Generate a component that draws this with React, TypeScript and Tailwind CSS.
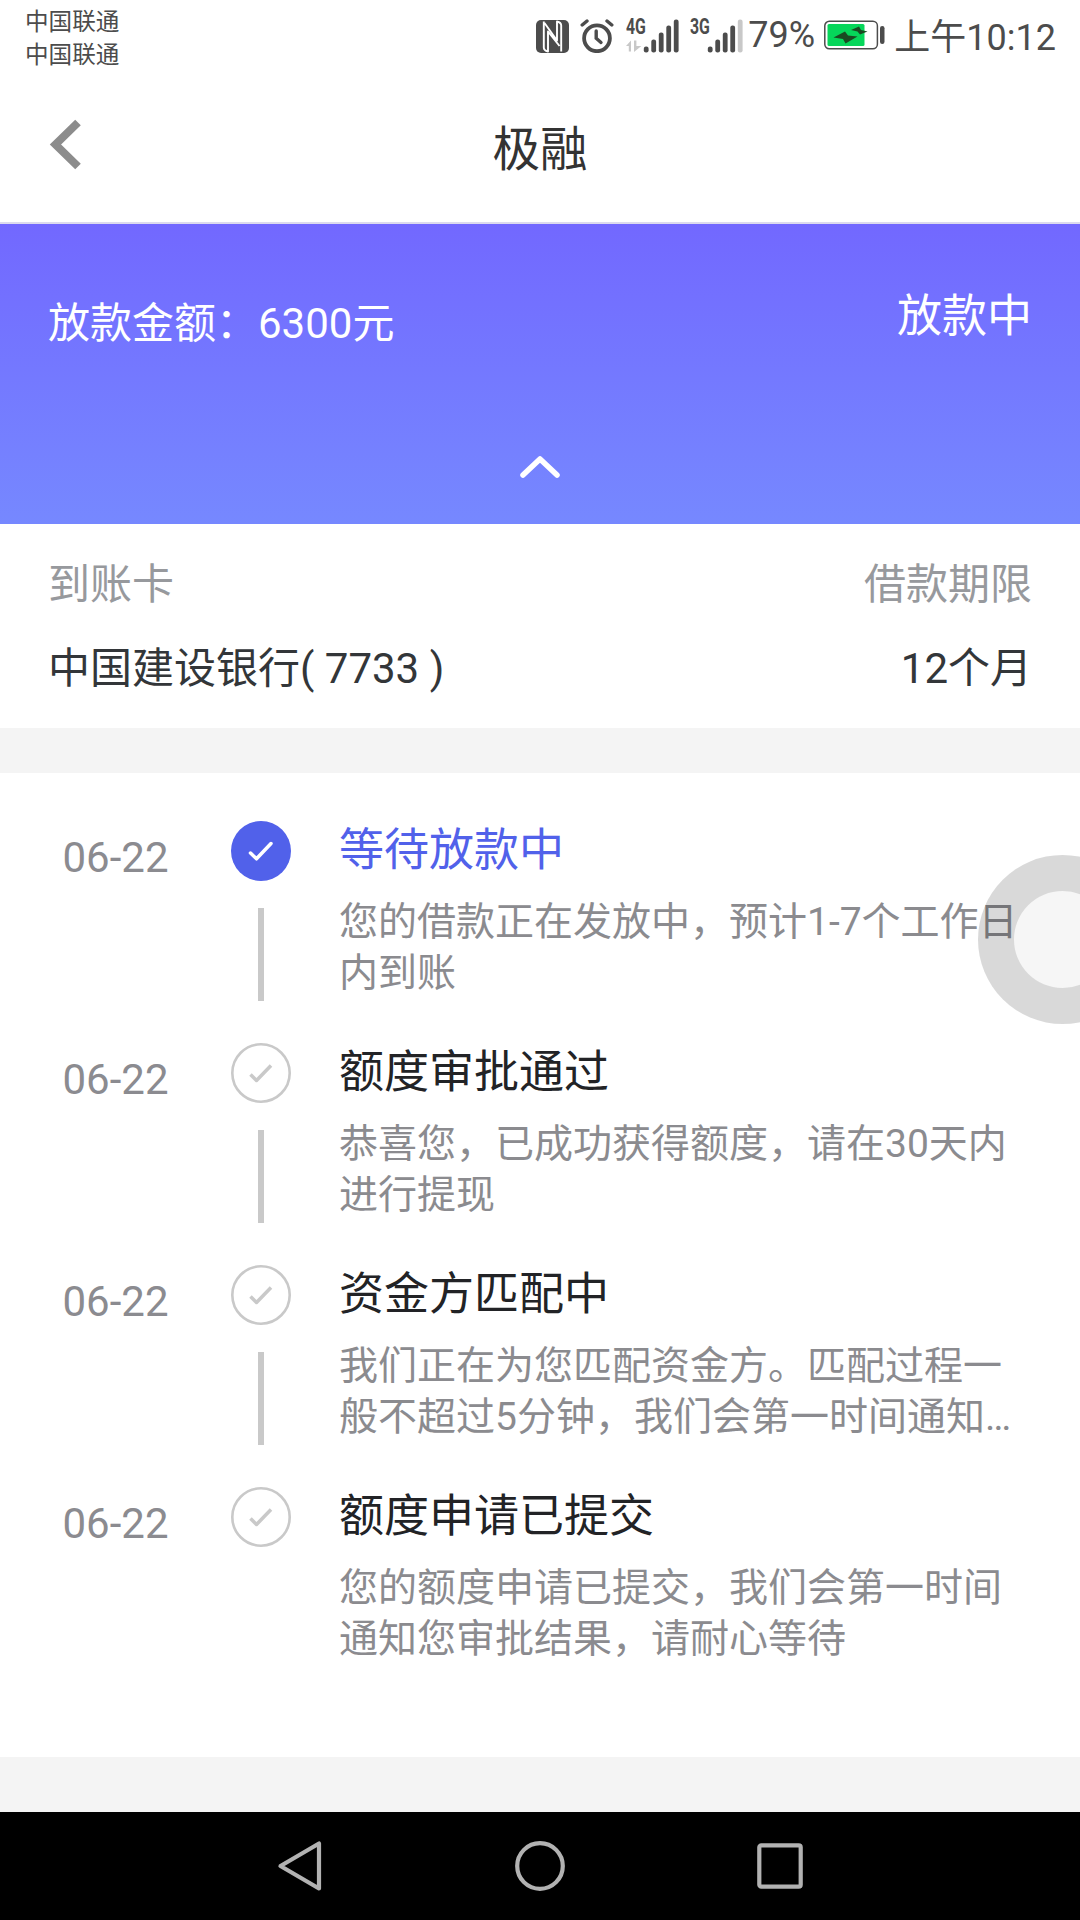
const NfcIcon = () => (
  <svg width="33" height="33" viewBox="0 0 33 33">
    <rect width="33" height="33" rx="5" fill="#4c4c4c" />
    <path
      d="M7.800 1.500V27.500Q7.800 30.500 12 31.500V11.500L23.500 26M25.200 31.500V5.500Q25.200 2.500 21 1.500V20.500L8.500 3"
      fill="none"
      stroke="#fff"
      strokeWidth="1.900"
      strokeLinejoin="round"
    />
  </svg>
);

const AlarmIcon = () => (
  <svg width="34" height="34" viewBox="0 0 34 34" fill="none" stroke="#4c4c4c" strokeWidth="3.800" strokeLinecap="round">
    <circle cx="17" cy="19.300" r="12.900" />
    <path d="M16.200 12v7.300l4.800 4.200" strokeWidth="3.400" />
    <path d="M2.200 6 7 2M31.800 6 27 2" strokeWidth="3.400" />
  </svg>
);

type SignalProps = {
  label: string;
  bars: number;
  data?: boolean;
};

const barHeights = [6, 13, 20, 27, 33];

const Signal = ({ label, bars, data }: SignalProps) => (
  <div className="relative h-[34px] w-[53px]">
    <span className="absolute left-0 top-0 origin-left scale-x-[0.72] text-[22px] font-bold leading-[16px]">{label}</span>
    <svg width="53" height="34" viewBox="0 0 53 34">
      {data && (
        <path d="M0 27 5 21.500V32.500H2.800V27zM8 21.500h2.400v5.500h5L8 33z" fill="#c8c8c8" />
      )}
      {barHeights.map((h, i) => (
        <rect key={h} x={17.8 + i * 7.5} y={33.5 - h} width="4.800" height={h} rx="2.200" fill={i < bars ? '#4c4c4c' : '#c8c8c8'} />
      ))}
    </svg>
  </div>
);

const BatteryIcon = () => (
  <svg width="61" height="30" viewBox="0 0 61 30">
    <rect x="0.800" y="1.300" width="52.600" height="27.500" rx="4.500" fill="#fff" stroke="#4c4c4c" strokeWidth="1.500" />
    <rect x="3.500" y="4" width="37" height="22" rx="1.500" fill="#06d65a" />
    <path d="M9.500 17.500 21 11.500 24 15.500 33.500 16.500 21.500 23.500 19 19z" fill="#1b4a22" />
    <path d="M27 10 35 6.500 37 10 43.500 11.500 36 14.500 33.500 11.500z" fill="#1b4a22" />
    <rect x="56" y="6" width="4.500" height="18" rx="2.200" fill="#4c4c4c" />
  </svg>
);

const StatusBar = () => (
  <div className="flex h-[72px] justify-between pl-[25px] pr-[24px] text-[#4c4c4c]">
    <div className="pt-[6px] text-[23.600px] leading-[33px]">
      <p>中国联通</p>
      <p>中国联通</p>
    </div>
    <div className="flex items-start text-[36px] leading-[40px]">
      <div className="mt-5 flex">
        <NfcIcon />
        <div className="ml-[11px] -mt-px">
          <AlarmIcon />
        </div>
      </div>
      <div className="ml-[12px] mt-[19px] flex gap-[11px]">
        <Signal label="4G" bars={5} data />
        <Signal label="3G" bars={4} />
      </div>
      <span className="ml-[5px] mt-[15px] w-[66px]">79%</span>
      <div className="ml-[10px] mt-5">
        <BatteryIcon />
      </div>
      <span className="ml-[9px] mt-[18px]">上午10:12</span>
    </div>
  </div>
);

const Header = () => (
  <header className="grid h-[152px] grid-cols-3 border-b-2 border-[#dcdaee]">
    <button className="ml-[49px] mt-[46px] h-[52px] w-[34px]">
      <svg width="34" height="52" viewBox="0 0 34 52">
        <path d="M29 4.500 6.500 26.500 29 48.500" fill="none" stroke="#8c8c8c" strokeWidth="8" />
      </svg>
    </button>
    <h1 className="pt-[48px] text-center text-[47.500px] leading-[60px] text-[#333]">极融</h1>
  </header>
);

const Summary = () => (
  <section className="flex h-[300px] flex-col justify-between bg-linear-to-b from-[#7268ff] to-[#7688ff] pb-[44px] pl-[48px] pr-[48px] pt-[63px] text-white">
    <div className="flex justify-between">
      <p className="pt-[7px] text-[42px] leading-[60px]">放款金额：6300元</p>
      <p className="text-[45px] leading-[60px]">放款中</p>
    </div>
    <svg className="self-center" width="44" height="26" viewBox="0 0 44 26">
      <path d="M5 21 22 5 39 21" fill="none" stroke="#fff" strokeWidth="5.500" strokeLinecap="round" strokeLinejoin="round" />
    </svg>
  </section>
);

const AccountInfo = () => (
  <section className="flex h-[204px] flex-col gap-6 px-12 pt-[31px] text-[42px] leading-[60px]">
    <div className="flex justify-between text-[#97999d]">
      <span>到账卡</span>
      <span>借款期限</span>
    </div>
    <div className="flex justify-between text-[#333639]">
      <span>中国建设银行( 7733 )</span>
      <span>12个月</span>
    </div>
  </section>
);

const steps = [
  {
    date: '06-22',
    title: '等待放款中',
    desc: '您的借款正在发放中，预计1-7个工作日内到账',
    active: true,
  },
  {
    date: '06-22',
    title: '额度审批通过',
    desc: '恭喜您，已成功获得额度，请在30天内进行提现',
    active: false,
  },
  {
    date: '06-22',
    title: '资金方匹配中',
    desc: '我们正在为您匹配资金方。匹配过程一般不超过5分钟，我们会第一时间通知…',
    active: false,
  },
  {
    date: '06-22',
    title: '额度申请已提交',
    desc: '您的额度申请已提交，我们会第一时间通知您审批结果，请耐心等待',
    active: false,
  },
];

const StepIcon = ({ active }: { active: boolean }) => (
  <svg width="60" height="60" viewBox="0 0 60 60" fill="none">
    {active ? (
      <circle cx="30" cy="30" r="30" fill="#5161ea" />
    ) : (
      <circle cx="30" cy="30" r="28.700" stroke="#c9c9c9" strokeWidth="2.600" />
    )}
    <path
      d={active ? 'M19.500 32 25.500 37.800 40 22.500' : 'M19.500 31.500 25.500 37.500 40 22.500'}
      stroke={active ? '#fff' : '#c9c9c9'}
      strokeWidth="3.500"
      strokeLinecap={active ? 'round' : 'butt'}
      strokeLinejoin="round"
    />
  </svg>
);

const Timeline = () => (
  <section className="h-[984px] pl-[62.500px] pr-[49px] pt-[48px]">
    {steps.map((step, i) => (
      <div key={step.title} className="flex h-[222px]">
        <span className="mt-[7px] w-[168.500px] text-[42px] leading-[60px] text-[#8b8b90]">{step.date}</span>
        <div className="flex w-[60px] flex-col items-center">
          <StepIcon active={step.active} />
          {i < steps.length - 1 && <div className="mt-[27px] h-[93px] w-[6px] bg-[#c9c9c9]" />}
        </div>
        <div className="ml-[48px] flex-1">
          <h2 className={step.active ? 'text-[45px] leading-[60px] text-[#5161ea]' : 'text-[45px] leading-[60px] text-[#222326]'}>
            {step.title}
          </h2>
          <p className="mt-[16px] text-[39px] leading-[51px] text-[#8b8b8f]">{step.desc}</p>
        </div>
      </div>
    ))}
  </section>
);

const NavBar = () => (
  <nav className="flex h-[108px] items-center bg-black pl-[277px]">
    <svg width="46" height="54" viewBox="0 0 46 54" fill="none" stroke="#b2b2b2" strokeWidth="4.200" strokeLinejoin="round">
      <path d="M42 4.500V49.500L3.500 27z" />
    </svg>
    <svg className="ml-[192px]" width="50" height="50" viewBox="0 0 50 50" fill="none" stroke="#b2b2b2" strokeWidth="4.200">
      <circle cx="25" cy="25" r="22.800" />
    </svg>
    <svg className="ml-[192px]" width="46" height="46" viewBox="0 0 46 46" fill="none" stroke="#b2b2b2" strokeWidth="4.200">
      <rect x="2.300" y="2.300" width="41.400" height="41.400" rx="2" />
    </svg>
  </nav>
);

const App = () => {
  return (
    <div className="relative h-[1920px] w-[1080px] overflow-hidden bg-white font-['Roboto','Noto_Sans_CJK_SC',sans-serif]">
      <StatusBar />
      <Header />
      <Summary />
      <AccountInfo />
      <div className="h-[45px] bg-[#f4f4f4]" />
      <Timeline />
      <div className="h-[55px] bg-[#f4f4f4]" />
      <NavBar />

      {/* Floating assistive dot, half off the right edge */}
      <div className="absolute left-[977.500px] top-[854.500px] size-[169px] rounded-full border-[36px] border-black/15 bg-[#f6f6f6] bg-clip-padding" />
    </div>
  );
};

export default App;
